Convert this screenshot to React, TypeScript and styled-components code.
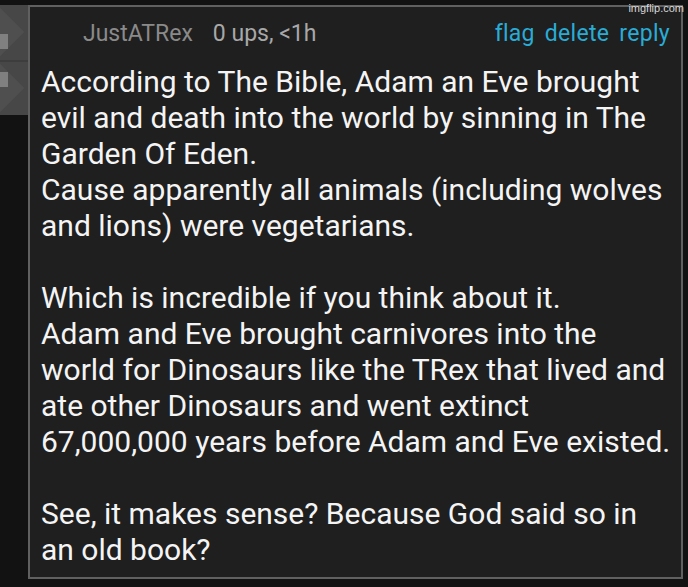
import * as React from "react";
import styled, { createGlobalStyle } from "styled-components";

const GlobalStyle = createGlobalStyle`
  html, body {
    margin: 0;
    padding: 0;
    background: #121212;
    font-family: Roboto, "Noto Sans", sans-serif;
  }
`;

const Page = styled.div`
  position: relative;
  width: 688px;
  height: 587px;
  overflow: hidden;
  background: #121212;
  display: flex;
  align-items: flex-start;
  padding-top: 5px;
  box-sizing: border-box;
`;

const VoteColumn = styled.div`
  width: 28px;
  height: 110px;
  background: #474747;
  display: flex;
  flex-direction: column;
`;

const VoteCell = styled.div<{ $down?: boolean }>`
  position: relative;
  flex: 1;
  display: flex;
  align-items: ${(p) => (p.$down ? "flex-start" : "flex-end")};
  padding: ${(p) => (p.$down ? "10px 0 0" : "0 0 11px")};
  border-top: ${(p) => (p.$down ? "2px solid #3d3d3d" : "none")};
  overflow: hidden;

  &::before {
    content: "";
    position: absolute;
    left: -24px;
    top: 50%;
    width: 40px;
    height: 40px;
    margin-top: -20px;
    background: #4f4f4f;
    transform: rotate(45deg);
  }
`;

const VoteMark = styled.div`
  position: relative;
  width: 8px;
  height: 15px;
  background: #808080;
`;

const Card = styled.div`
  flex: 1;
  margin-right: 5px;
  height: 574px;
  box-sizing: border-box;
  border: 2px solid #606060;
  background: #1f1f1f;
  padding: 14px 8px 0 11px;
`;

const Header = styled.div`
  display: flex;
  align-items: center;
  height: 26px;
  line-height: 26px;
  font-size: 23px;
  padding-left: 42px;
  margin-right: 3px;
`;

const Author = styled.span`
  color: #8a8a8a;
  margin-right: 20px;
`;

const Meta = styled.span`
  color: #a8a8a8;
`;

const Actions = styled.div`
  margin-left: auto;
  display: flex;
  gap: 10px;
  letter-spacing: 0.3px;
`;

const Action = styled.span`
  color: #29acd6;
`;

const Body = styled.div`
  margin-top: 17px;
  color: #f4f4f4;
  font-size: 30px;
  line-height: 36px;
  white-space: pre-line;
`;

const Watermark = styled.div`
  position: absolute;
  top: 2px;
  right: 4px;
  font-size: 11px;
  color: #d8d8d8;
  font-family: "Liberation Sans", Arial, sans-serif;
`;

const text = `According to The Bible, Adam an Eve brought evil and death into the world by sinning in The Garden Of Eden.
Cause apparently all animals (including wolves and lions) were vegetarians.

Which is incredible if you think about it.
Adam and Eve brought carnivores into the world for Dinosaurs like the TRex that lived and ate other Dinosaurs and went extinct 67,000,000 years before Adam and Eve existed.

See, it makes sense? Because God said so in an old book?`;

export default function App() {
  return (
    <>
      <GlobalStyle />
      <Page>
        <VoteColumn>
          <VoteCell>
            <VoteMark />
          </VoteCell>
          <VoteCell $down>
            <VoteMark />
          </VoteCell>
        </VoteColumn>
        <Card>
          <Header>
            <Author>JustATRex</Author>
            <Meta>0 ups, &lt;1h</Meta>
            <Actions>
              <Action>flag</Action>
              <Action>delete</Action>
              <Action>reply</Action>
            </Actions>
          </Header>
          <Body>{text}</Body>
        </Card>
        <Watermark>imgflip.com</Watermark>
      </Page>
    </>
  );
}
